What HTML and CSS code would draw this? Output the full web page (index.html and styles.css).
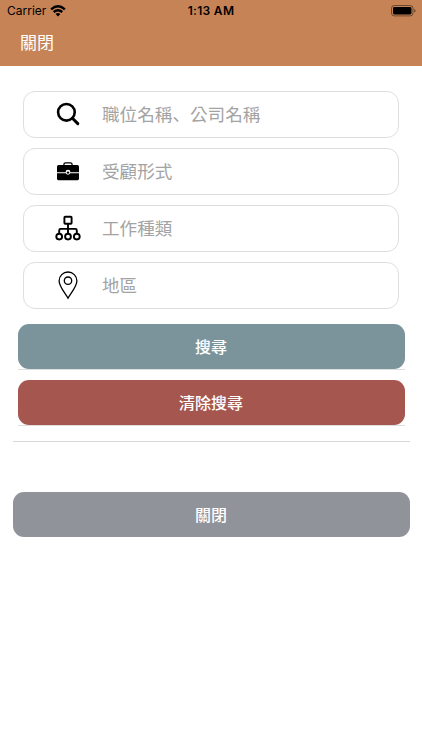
FILE: index.html
```html
<!DOCTYPE html>
<html lang="zh-Hant">
<head>
<meta charset="utf-8">
<title>搜尋</title>
<link rel="stylesheet" href="styles.css">
</head>
<body>
<header class="header">
  <div class="status">
    <div class="carrier">
      <span>Carrier</span>
      <svg class="wifi" width="16" height="12" viewBox="0 0 16 12">
        <g fill="none" stroke="#000" stroke-width="2.4">
          <path d="M1.1 4.3Q8-1.6 14.9 4.3"/>
          <path d="M3.7 7Q8 3.3 12.3 7"/>
        </g>
        <path d="M5.6 8.9Q8 7 10.4 8.9L8 11.4Z"/>
      </svg>
    </div>
    <span class="clock">1:13 AM</span>
    <svg class="battery" width="25" height="12" viewBox="0 0 25 12">
      <rect x=".5" y=".5" width="21.5" height="10.4" rx="2.8" fill="none" stroke="#000" stroke-opacity=".45"/>
      <rect x="2" y="2" width="18.5" height="7.4" rx="1.4"/>
      <path d="M23.2 4Q24.6 4.5 24.6 5.7T23.2 7.4Z" fill-opacity=".5"/>
    </svg>
  </div>
  <div class="nav">關閉</div>
</header>
<main>
  <div class="fields">
    <div class="field">
      <svg class="icon" width="28" height="30" viewBox="0 0 28 30" fill="none" stroke="#000">
        <circle cx="12.4" cy="13.3" r="8.3" stroke-width="2.6"/>
        <path d="M18.4 19.3L23.8 24.6" stroke-width="3" stroke-linecap="round"/>
      </svg>
      <span>職位名稱<span class="comma" lang="ja">、</span>公司名稱</span>
    </div>
    <div class="field">
      <svg class="icon" width="28" height="30" viewBox="0 0 28 30">
        <path d="M9.9 9.5V8.6Q9.9 6.9 11.6 6.9H16.4Q18.1 6.9 18.1 8.6V9.5" fill="none" stroke="#000" stroke-width="1.3"/>
        <path d="M4.6 8.9H23.4Q25 8.9 25 10.5V16.2H16.4A2.4 2.4 0 0 0 11.6 16.2H3V10.5Q3 8.9 4.6 8.9Z"/>
        <path d="M3 17.3H11.8A2.4 2.4 0 0 0 16.2 17.3H25V22.8Q25 24.2 23.6 24.2H4.4Q3 24.2 3 22.8Z"/>
        <circle cx="14" cy="16.6" r="1.2"/>
      </svg>
      <span>受顧形式</span>
    </div>
    <div class="field">
      <svg class="icon" width="28" height="30" viewBox="0 0 28 30" fill="none" stroke="#000" stroke-width="1.9">
        <rect x="10.4" y="3.8" width="7.2" height="6.9" rx=".8"/>
        <path d="M14 10.7V20.6M5.2 20.6V17.4Q5.2 15.9 6.7 15.9H21.3Q22.8 15.9 22.8 17.4V20.6"/>
        <circle cx="5.2" cy="23.6" r="2.9"/>
        <circle cx="14" cy="23.6" r="2.9"/>
        <circle cx="22.8" cy="23.6" r="2.9"/>
      </svg>
      <span>工作種類</span>
    </div>
    <div class="field">
      <svg class="icon" width="28" height="30" viewBox="0 0 28 30" fill="none" stroke="#000" stroke-width="1.3">
        <path d="M14 28.2C11.5 23.5 5.1 16.5 5.1 11A8.9 9 0 0 1 22.9 11C22.9 16.5 16.5 23.5 14 28.2Z"/>
        <circle cx="14" cy="10.7" r="3.7"/>
      </svg>
      <span>地區</span>
    </div>
  </div>
  <div class="actions">
    <div class="row"><div class="button search">搜尋</div></div>
    <div class="row"><div class="button clear">清除搜尋</div></div>
  </div>
  <div class="button close">關閉</div>
</main>
</body>
</html>
```
FILE: styles.css
```css
* { box-sizing: border-box; }
body {
  margin: 0;
  background: #fff;
  font-family: "Noto Sans CJK TC", sans-serif;
}
.header {
  height: 65.5px;
  background: #c68456;
}
.status {
  display: grid;
  grid-template-columns: 1fr auto 1fr;
  align-items: center;
  height: 22px;
  padding: 0 6px 0 7px;
  font: 12px/22px Inter, sans-serif;
  color: #000;
}
.carrier { display: flex; align-items: center; gap: 4px; }
.clock { padding-right: 1px; font-weight: 600; letter-spacing: .3px; }
.battery { justify-self: end; }
.nav {
  padding-left: 20px;
  font-size: 17px;
  line-height: 40px;
  color: #fff;
}
main { padding: 25.5px 12.5px 0; }
.fields {
  display: flex;
  flex-direction: column;
  gap: 10px;
  padding: 0 10.5px;
}
.field {
  display: flex;
  align-items: center;
  height: 47px;
  padding: 0 0 2px 30px;
  border: 1px solid #dedede;
  border-radius: 12px;
  font-size: 17.6px;
  color: #a3a3a3;
}
.icon { flex: none; margin-right: 20px; }
.comma { font-family: "Noto Sans CJK JP", sans-serif; }
.actions {
  display: flex;
  flex-direction: column;
  gap: 10px;
  padding: 15px 5px 15px;
  border-bottom: 1px solid #d8d8d8;
}
.row { border-bottom: 1px solid #dedede; }
.button {
  height: 45px;
  border-radius: 11px;
  font-size: 16px;
  font-weight: 500;
  line-height: 45px;
  text-align: center;
  color: #fff;
}
.search { background: #7b949b; }
.clear { background: #a4564f; }
.close { margin-top: 50px; background: #91939b; }
```
